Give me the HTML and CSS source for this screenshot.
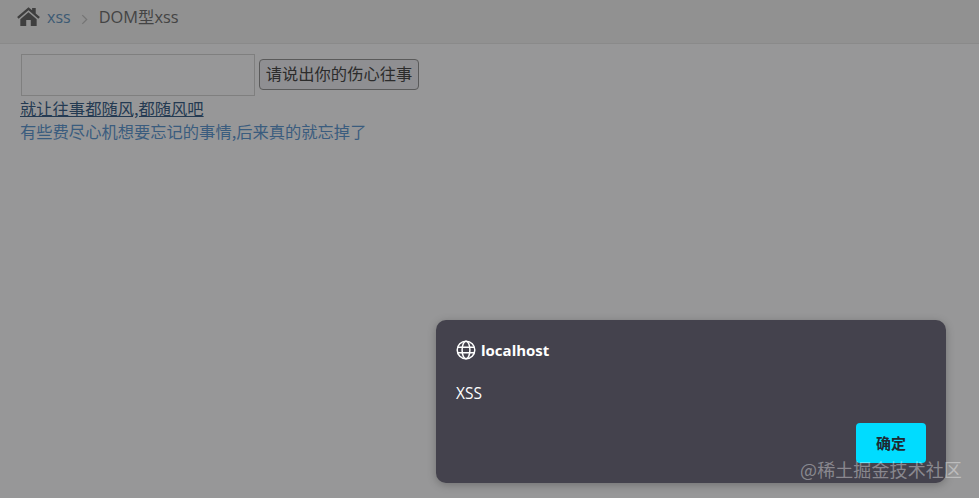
FILE: index.html
```html
<!DOCTYPE html>
<html lang="zh-CN">
<head>
<meta charset="utf-8">
<title>DOM型xss</title>
<link rel="stylesheet" href="styles.css">
</head>
<body>
<header class="crumbs">
  <svg class="home" viewBox="0 0 24 20" width="23" height="19" aria-hidden="true"><path d="M12 0.2 L15.8 3.5 V1 H19.6 V6.8 L24 10.6 L22.4 12.4 L12 3.4 L1.6 12.4 L0 10.6 Z M12 5.4 L20.6 12.8 V20 H14.4 V13.6 H9.6 V20 H3.4 V12.8 Z"/></svg>
  <a class="crumb-link">xss</a>
  <svg class="sep" viewBox="0 0 8 12" width="7" height="11" aria-hidden="true"><path d="M1.5 1 L6.5 6 L1.5 11" fill="none" stroke="#757575" stroke-width="1.4"/></svg>
  <span class="crumb-current">DOM型xss</span>
</header>
<main class="content">
  <div class="form-row">
    <input class="field" type="text">
    <button class="submit" type="button">请说出你的伤心往事</button>
  </div>
  <a class="line link-under">就让往事都随风,都随风吧</a>
  <p class="line link-plain">有些费尽心机想要忘记的事情,后来真的就忘掉了</p>
</main>
<section class="dialog">
  <div class="dialog-title">
    <svg class="globe" viewBox="0 0 20 20" width="20" height="20" aria-hidden="true"><g fill="none" stroke="#fff" stroke-width="1.5"><circle cx="10" cy="10" r="8.8"/><ellipse cx="10" cy="10" rx="3.9" ry="8.8"/><path d="M1.8 7.2 H18.2 M1.8 12.8 H18.2"/></g></svg>
    <span>localhost</span>
  </div>
  <div class="dialog-msg">XSS</div>
  <div class="dialog-actions"><button class="ok" type="button">确定</button></div>
</section>
<div class="watermark">@稀土掘金技术社区</div>
</body>
</html>
```

FILE: styles.css
```css
* { box-sizing: border-box; }
html, body { height: 100%; }
body {
  margin: 0;
  height: 498px;
  overflow: hidden;
  background: #979798;
  color: #3d3d3d;
  font-family: "Open Sans", "Noto Sans CJK SC", sans-serif;
  font-size: 14px;
}
.crumbs {
  height: 44px;
  display: flex;
  align-items: flex-start;
  padding: 7px 0 0 17px;
  background: #919191;
  border-bottom: 1px solid #8a8a8a;
}
.home { fill: #3f3f3f; margin-right: 7px; }
.crumb-link { color: #3c5a74; font-size: 16px; line-height: 20px; }
.sep { margin: 7px 11px 0 10px; }
.crumb-current { font-size: 16.4px; line-height: 20px; color: #444; }
.content { padding: 10px 0 0 21px; }
.form-row { display: flex; align-items: flex-start; gap: 4px; height: 42px; }
.field {
  width: 234px;
  height: 42px;
  background: #979798;
  border: 1px solid #7f7f7f;
  margin: 0;
}
.submit {
  width: 160px;
  height: 31px;
  padding: 0 0 2px;
  margin-top: 5px;
  border: 1px solid #5a5a5a;
  border-radius: 4px;
  background: #8f8f92;
  color: #2c2c2c;
  font-family: "Noto Sans CJK SC", sans-serif;
  font-size: 16.3px;
  line-height: 27px;
}
.line {
  display: block;
  margin: 0 0 0 -1px;
  font-size: 16.3px;
  line-height: 23px;
  font-family: "Noto Sans CJK SC", sans-serif;
}
.link-under { color: #243a52; text-decoration: underline; margin-top: 1px; }
.link-plain { color: #3a5c7e; }
.dialog {
  position: absolute;
  left: 436px;
  top: 320px;
  width: 510px;
  height: 163px;
  padding: 20px;
  border-radius: 10px;
  background: #44424d;
  color: #fff;
  box-shadow: 0 2px 8px rgba(0,0,0,.25);
}
.dialog-title {
  display: flex;
  align-items: center;
  gap: 5px;
  height: 20px;
  font-family: "Open Sans", sans-serif;
  font-size: 15px;
  font-weight: 700;
}
.dialog-msg {
  margin-top: 23px;
  font-size: 15.5px;
  line-height: 20px;
  font-family: "Open Sans", sans-serif;
}
.dialog-actions { display: flex; justify-content: flex-end; margin-top: 20px; }
.ok {
  width: 70px;
  height: 40px;
  padding: 0 0 2px;
  border: 0;
  border-radius: 4px;
  background: #00dcff;
  color: #1e2a33;
  font-family: "Noto Sans CJK SC", sans-serif;
  font-size: 15px;
  font-weight: 700;
}
.watermark {
  position: absolute;
  left: 800px;
  top: 457px;
  font-family: "Noto Sans CJK SC", sans-serif;
  font-size: 18px;
  line-height: 24px;
  color: rgba(255,255,255,.38);
  white-space: nowrap;
  letter-spacing: 0.1px;
}
```
